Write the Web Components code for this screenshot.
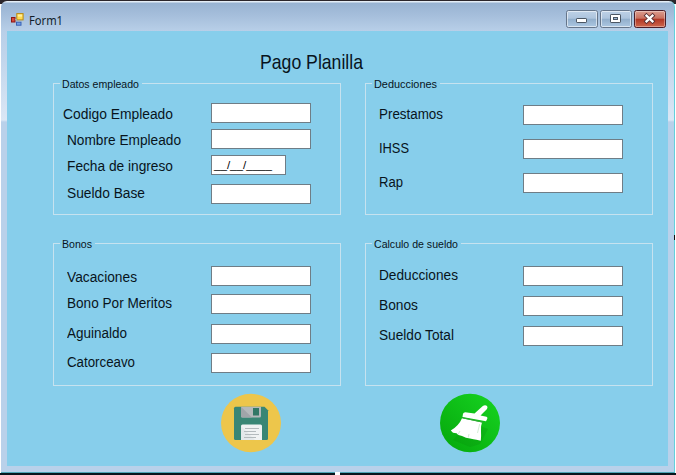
<!DOCTYPE html>
<html lang="es">
<head>
<meta charset="utf-8">
<title>Form1</title>
<style>
html,body{margin:0;width:676px;height:475px;overflow:hidden;background:#fff;font-family:"Liberation Sans",Arial,sans-serif;color:#08141c}
</style>
</head>
<body>
<payroll-desktop></payroll-desktop>
<script>
const define = (name, html, setup) => {
  const t = document.createElement('template');
  t.innerHTML = html;
  customElements.define(name, class extends HTMLElement {
    connectedCallback() {
      if (this.shadowRoot) return;
      this.attachShadow({mode: 'open'}).append(t.content.cloneNode(true));
      if (setup) setup(this, this.shadowRoot);
    }
  });
};

/* Text condensed horizontally to a given width */
define('fit-text', `<style>
:host{display:block;white-space:nowrap}
span{display:inline-block;transform-origin:0 50%}
</style><span></span>`, (el, root) => {
  const s = root.querySelector('span');
  s.textContent = el.getAttribute('text');
  const w = parseFloat(el.getAttribute('width'));
  el.style.width = w + 'px';
  s.style.transform = 'scaleX(' + w / s.getBoundingClientRect().width + ')';
});

define('field-row', `<style>
:host{display:flex;align-items:flex-start;height:20px;flex:none}
fit-text{font-size:15.5px;line-height:20px;height:20px}
.l{flex:none;box-sizing:border-box}
.box{box-sizing:border-box;height:20px;background:#fff;border:1px solid #6f7d86;flex:none;padding-left:2px;overflow:hidden}
.box fit-text{font-size:11.5px;line-height:19px;height:18px;color:#000}
</style><div class="l"></div><div class="box"></div>`, (el, root) => {
  const a = (n, d) => el.getAttribute(n) ?? d;
  const l = root.querySelector('.l'), b = root.querySelector('.box');
  el.style.marginTop = a('gap', 0) + 'px';
  l.style.width = '157px';
  l.style.paddingLeft = a('inset', 13) + 'px';
  l.style.marginTop = a('drop', -1) + 'px';
  l.innerHTML = '<fit-text text="' + a('label') + '" width="' + a('width') + '"></fit-text>';
  b.style.width = a('box', 100) + 'px';
  if (a('mask')) b.innerHTML = '<fit-text text="' + a('mask') + '" width="58"></fit-text>';
});

define('group-box', `<style>
:host{display:grid;grid-template-rows:14px 1fr;width:288px;box-sizing:border-box}
.head{display:flex;align-items:stretch;height:14px}
.head i{border-top:1px solid #c6e2ef;margin-top:7px;box-sizing:border-box}
.a{width:7px;border-left:1px solid #c6e2ef}
.b{flex:1;border-right:1px solid #c6e2ef}
.head fit-text{font-size:11.5px;line-height:16px;margin:0 3px 0 2px}
.body{display:flex;flex-direction:column;border:1px solid #c6e2ef;border-top:0;box-sizing:border-box}
</style><div class="head"><i class="a"></i><fit-text></fit-text><i class="b"></i></div><div class="body"><slot></slot></div>`, (el, root) => {
  const old = root.querySelector('fit-text'), f = document.createElement('fit-text');
  f.setAttribute('text', el.getAttribute('legend'));
  f.setAttribute('width', el.getAttribute('width'));
  old.replaceWith(f);
});

define('window-button', `<style>
:host{display:block;width:32px;height:19px}svg{display:block}
</style><svg width="32" height="19" viewBox="0 0 32 19"></svg>`, (el, root) => {
  const k = el.getAttribute('kind'), c = k === 'close';
  const glyph = {
    min: '<rect x="10.500" y="8.500" width="10" height="4" rx=".6" fill="#fff" stroke="#4b5663"/>',
    max: '<rect x="10.500" y="4.500" width="10" height="8" rx=".6" fill="#fff" stroke="#4b5663"/><rect x="13.500" y="7.500" width="4" height="2" fill="#9bb6d2" stroke="#4b5663"/>',
    close: '<path d="M12.500 5.700l6 5.600M18.500 5.700l-6 5.600" stroke="#593033" stroke-width="4" stroke-linecap="square"/><path d="M12.500 5.700l6 5.600M18.500 5.700l-6 5.600" stroke="#fff" stroke-width="2.300" stroke-linecap="square"/>'
  }[k];
  root.querySelector('svg').innerHTML =
    '<defs><linearGradient id="g" x1="0" y1="0" x2="0" y2="1">' + (c
      ? '<stop offset="0" stop-color="#dda092"/><stop offset=".46" stop-color="#c9705f"/><stop offset=".5" stop-color="#b03523"/><stop offset="1" stop-color="#d06a50"/>'
      : '<stop offset="0" stop-color="#bfd2e7"/><stop offset=".46" stop-color="#adc4dd"/><stop offset=".5" stop-color="#91aecb"/><stop offset="1" stop-color="#aec9e4"/>') +
    '</linearGradient></defs><rect x=".5" y=".5" width="31" height="17" rx="2" fill="url(#g)" stroke="' + (c ? '#4a1d28' : '#65758a') +
    '"/><rect x="1.500" y="1.500" width="29" height="15" rx="1" fill="none" stroke="#fff" stroke-opacity="' + (c ? .35 : .55) + '"/>' + glyph;
});

define('title-bar', `<style>
:host{display:flex;height:30px;box-sizing:border-box;padding:9px 8px 0 9px;align-items:flex-start}
.icon{display:block;margin:3px 5px 0 1px}
fit-text{font:13px/18px "Noto Sans","Open Sans",sans-serif;margin-top:1px;flex:1;color:#111c2a}
.buttons{display:flex;gap:2px}
</style>
<svg class="icon" width="13" height="13" viewBox="0 0 13 13">
<rect x=".5" y="4.500" width="3.500" height="4.500" fill="#d64a3c" stroke="#8e1715"/>
<rect x="5.800" y=".6" width="6.300" height="6.300" fill="#ffdb50" stroke="#b98913"/>
<path d="M6.800 1.600h4.300v2H6.800z" fill="#fff0a0"/>
<rect x="5.500" y="9.200" width="4.500" height="3" fill="#6f9fe9" stroke="#3a62b4"/>
<path d="M4 6.500h2M8 7v2" stroke="#a7a9a4"/></svg>
<fit-text text="Form1" width="34"></fit-text>
<div class="buttons"><window-button kind="min"></window-button><window-button kind="max"></window-button><window-button kind="close"></window-button></div>`);

define('save-button', `<style>:host{display:block;width:60px;height:60px}svg{display:block}</style>
<svg width="60" height="60" viewBox="0 0 60 60">
<ellipse cx="30" cy="30" rx="30" ry="29.200" fill="#edc64b"/>
<path d="M14.500 13.800H43.500L47 17.300V45.500Q47 47 45.500 47H14.500Q13 47 13 45.500V15.300Q13 13.800 14.500 13.800Z" fill="#398675"/>
<path d="M20 13.800H40V23Q40 24.500 38.500 24.500H21.500Q20 24.500 20 23Z" fill="#b4b9bb"/>
<path d="M20 13.800L31 24.500H21.500Q20 24.500 20 23Z" fill="#a0a5a9"/>
<rect x="32" y="15" width="6" height="7.500" fill="#327766"/>
<path d="M20 47V33Q20 31.500 21.500 31.500H39.500Q41 31.500 41 33V47Z" fill="#f0f2f3"/>
<path d="M20 47V33L34 47Z" fill="#e4e8ea"/>
<path d="M24 35.500H38M23 38.500H35M24 41.500H38M23 44.500H35" stroke="#b4babd" stroke-width="1"/>
</svg>`);

define('clean-button', `<style>:host{display:block;width:60px;height:60px}svg{display:block}</style>
<svg width="60" height="60" viewBox="0 0 60 60">
<defs><linearGradient id="g" x1="1" y1="0" x2="0" y2="1"><stop offset="0" stop-color="#17d522"/><stop offset="1" stop-color="#05a60b"/></linearGradient></defs>
<ellipse cx="30" cy="30" rx="30" ry="29.200" fill="url(#g)"/>
<path d="M27 28L48 36 40 51 30 54 13 47 20 39Z" fill="#078c0d" opacity=".25"/>
<path d="M42.500 13.300Q45 11.500 47 13 48 14 47 16L40.500 22.500 46.500 23.800Q47.800 24.200 47.300 25.800L46 28.200 22.500 24 23 20.800Q23.500 19.300 25.300 19.300L34.500 20.500Z" fill="#fff"/>
<path d="M22 25.200L42 29.500Q40.500 33 41 38 41.300 43 40.800 47.800L36.500 46.700 33.500 46.200 30 45.400 26 44.800 22 43 18.500 42 16.500 40.300 13 39.700 10.800 37.500Q19 32.500 22 25.200Z" fill="#fff"/>
<path d="M22.500 24.800L43 29.200" stroke="#35a83a" stroke-width="1"/>
<path d="M39.700 31L37.500 40M20 38l-2 3.500M29 41l-.8 3.500" stroke="#c2e6c4" stroke-width=".7"/>
</svg>`);

define('payroll-form', `<style>
:host{display:block;width:661px;height:435px;background:#87ceeb;box-sizing:border-box;padding-top:19px}
.title{font-size:21px;line-height:24px;margin:0 0 2px 253px}
.groups{display:grid;grid-template-columns:288px 288px;grid-template-rows:139px 150px;column-gap:24px;row-gap:21px;margin-left:46px}
.actions{display:flex;gap:159px;margin:7px 0 0 214px}
</style>
<fit-text class="title" text="Pago Planilla" width="103"></fit-text>
<div class="groups">
<group-box legend="Datos empleado" width="77">
<field-row gap="13" inset="9" drop="1" label="Codigo Empleado" width="110"></field-row>
<field-row gap="6" drop="1" label="Nombre Empleado" width="114"></field-row>
<field-row gap="6" drop="1" label="Fecha de ingreso" width="106" box="75" mask="__/__/____"></field-row>
<field-row gap="9" label="Sueldo Base" width="78"></field-row>
</group-box>
<group-box legend="Deducciones" width="63">
<field-row gap="15" label="Prestamos" width="64"></field-row>
<field-row gap="14" label="IHSS" width="30"></field-row>
<field-row gap="14" label="Rap" width="24"></field-row>
</group-box>
<group-box legend="Bonos" width="30">
<field-row gap="16" drop="1" label="Vacaciones" width="70"></field-row>
<field-row gap="8" label="Bono Por Meritos" width="105"></field-row>
<field-row gap="10" label="Aguinaldo" width="60"></field-row>
<field-row gap="9" label="Catorceavo" width="68"></field-row>
</group-box>
<group-box legend="Calculo de sueldo" width="84">
<field-row gap="16" label="Deducciones" width="79"></field-row>
<field-row gap="10" label="Bonos" width="39"></field-row>
<field-row gap="10" label="Sueldo Total" width="75"></field-row>
</group-box>
</div>
<div class="actions"><save-button></save-button><clean-button></clean-button></div>`);

define('payroll-desktop', `<style>
:host{display:block;position:relative;width:676px;height:475px;background:linear-gradient(#2b262b 0 4px,transparent 4px calc(100% - 2px),#06151c calc(100% - 2px)),#fff}
.win{box-sizing:border-box;width:674px;height:472px;margin-left:1px;border-right:1px solid #62d0dc;border-bottom:1px solid #4aa4b4;border-radius:6px 6px 0 0;
background:linear-gradient(#e4edf6 0 1px,#98b3d2 2px,#a5bedb 14px,#b8cfe8 30px,#c2d6ec 60px,#dbe7f5 119px,#b9d1ea 121px,#b9d1ea)}
payroll-form{margin-left:6px}
.grip{position:absolute;background:#fff;width:5px;height:3px;left:335px;top:472px}
.side{position:absolute;background:#111;width:1px;height:5px;left:674px;top:235px}
.top{height:1px}
</style><div class="top"></div><div class="win"><title-bar></title-bar><payroll-form></payroll-form></div><div class="grip"></div><div class="side"></div>`);
</script>
</body>
</html>
